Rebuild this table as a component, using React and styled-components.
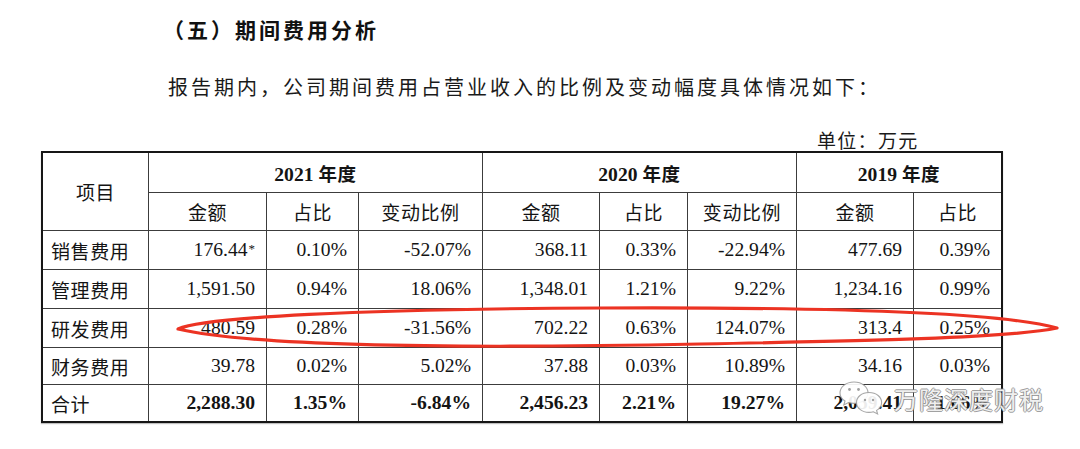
import React from 'react';
import styled, { createGlobalStyle } from 'styled-components';

const GlobalStyle = createGlobalStyle`
  html, body {
    margin: 0;
    padding: 0;
    background: #fff;
  }
  body {
    font-family: "Liberation Serif", "Noto Sans CJK SC", serif;
    color: #111;
  }
`;

const Page = styled.div`
  position: relative;
  width: 1080px;
  height: 449px;
  overflow: hidden;
  padding-left: 41px;
  box-sizing: border-box;
`;

const Title = styled.h2`
  margin: 0;
  padding: 14px 0 0 122px;
  font-family: "Noto Sans CJK SC", sans-serif;
  font-size: 21px;
  font-weight: 700;
  letter-spacing: 3px;
  line-height: 30px;
  color: #111;
`;

const Intro = styled.p`
  margin: 28px 0 0 127px;
  font-family: "Noto Sans CJK SC", sans-serif;
  font-size: 20px;
  font-weight: 400;
  letter-spacing: 3px;
  line-height: 30px;
  color: #1a1a1a;
`;

const Unit = styled.div`
  margin: 27px 0 0 776px;
  font-family: "Noto Sans CJK SC", sans-serif;
  font-size: 19px;
  letter-spacing: 1.3px;
  line-height: 22px;
  color: #1a1a1a;
`;

const Table = styled.div`
  display: grid;
  width: 962px;
  box-sizing: border-box;
  grid-template-columns: 105px 117px 91px 123px 116px 87px 108px 116px 87px;
  grid-template-rows: 39px 37px 38px 38px 38px 36px 36px;
  gap: 1px;
  background: #3c3c3c;
  border: 2px solid #161616;
  box-shadow: 0 1px 1px rgba(0, 0, 0, 0.25);
`;

const Cell = styled.div`
  grid-column: span ${({ $colSpan }) => $colSpan || 1};
  grid-row: span ${({ $rowSpan }) => $rowSpan || 1};
  background: #fff;
  display: flex;
  align-items: center;
  justify-content: ${({ $align }) =>
    $align === 'right' ? 'flex-end' : $align === 'left' ? 'flex-start' : 'center'};
  padding: ${({ $align }) =>
    $align === 'right' ? '0 11px 0 0' : $align === 'left' ? '0 0 0 8px' : '0'};
  font-family: ${({ $cjk }) =>
    $cjk ? '"Noto Sans CJK SC", sans-serif' : '"Liberation Serif", "Noto Sans CJK SC", serif'};
  font-size: ${({ $cjk }) => ($cjk ? '19px' : '19.6px')};
  letter-spacing: ${({ $cjk }) => ($cjk ? '0.6px' : '0')};
  font-weight: ${({ $bold }) => ($bold ? 700 : 400)};
  color: #141414;
  white-space: nowrap;
`;

const YearHead = styled.span`
  font-family: "Liberation Serif", "Noto Sans CJK SC", serif;
  font-size: 19.6px;
  font-weight: 700;

  b {
    font-family: "Noto Sans CJK SC", sans-serif;
    font-size: 18.5px;
    font-weight: 600;
    margin-left: 5px;
    letter-spacing: 0.6px;
  }
`;

const Sup = styled.span`
  font-size: 13px;
  line-height: 14px;
  position: relative;
  top: -1px;
  margin-left: 1px;
`;

const Overlay = styled.svg`
  position: absolute;
  left: 0;
  top: 0;
  pointer-events: none;
`;

const Watermark = styled.div`
  position: absolute;
  left: 837px;
  top: 380px;
  display: flex;
  align-items: center;
  gap: 9px;
  pointer-events: none;

  span {
    font-family: "Noto Sans CJK SC", sans-serif;
    font-size: 24px;
    font-weight: 400;
    letter-spacing: 1px;
    line-height: 30px;
    color: rgba(255, 255, 255, 0.9);
    text-shadow:
      1px 0 0 rgba(130, 130, 130, 0.75),
      -1px 0 0 rgba(130, 130, 130, 0.75),
      0 1px 0 rgba(130, 130, 130, 0.75),
      0 -1px 0 rgba(130, 130, 130, 0.75);
    margin-top: 2px;
  }
`;

const WeChatMark = () => (
  <svg width="48" height="36" viewBox="0 0 48 36">
    <g fill="rgba(255,255,255,0.92)" stroke="rgba(150,150,150,0.85)" strokeWidth="1.1">
      <path d="M17 2 C8.5 2 3 7.5 3 13 C3 16.5 5 19.2 8 21 L6.8 25 L11.5 22.6 C13.2 23.1 15 23.4 17 23.4 C25 23.4 31 18.2 31 12.8 C31 7.3 25.3 2 17 2 Z" />
      <path d="M32 12.5 C24.5 12.5 19.5 17.2 19.5 22.5 C19.5 27.8 24.5 32.4 32 32.4 C33.6 32.4 35 32.2 36.4 31.8 L40.6 34 L39.6 30.4 C42.6 28.6 44.6 25.8 44.6 22.5 C44.6 17.2 39.5 12.5 32 12.5 Z" />
    </g>
    <g fill="rgba(150,150,150,0.9)">
      <circle cx="12.5" cy="9.5" r="1.4" />
      <circle cx="21.5" cy="9.5" r="1.4" />
      <circle cx="28" cy="20" r="1.2" />
      <circle cx="36" cy="20" r="1.2" />
    </g>
  </svg>
);

const years = [
  { label: '2021', span: 3 },
  { label: '2020', span: 3 },
  { label: '2019', span: 2 },
];

const subHeads = ['金额', '占比', '变动比例', '金额', '占比', '变动比例', '金额', '占比'];

const rows = [
  { name: '销售费用', values: ['176.44', '0.10%', '-52.07%', '368.11', '0.33%', '-22.94%', '477.69', '0.39%'], mark: true },
  { name: '管理费用', values: ['1,591.50', '0.94%', '18.06%', '1,348.01', '1.21%', '9.22%', '1,234.16', '0.99%'] },
  { name: '研发费用', values: ['480.59', '0.28%', '-31.56%', '702.22', '0.63%', '124.07%', '313.4', '0.25%'] },
  { name: '财务费用', values: ['39.78', '0.02%', '5.02%', '37.88', '0.03%', '10.89%', '34.16', '0.03%'] },
  { name: '合计', values: ['2,288.30', '1.35%', '-6.84%', '2,456.23', '2.21%', '19.27%', '2,059.41', '1.66%'], total: true },
];

const App = () => (
  <>
    <GlobalStyle />
    <Page>
      <Title>（五）期间费用分析</Title>
      <Intro>报告期内，公司期间费用占营业收入的比例及变动幅度具体情况如下：</Intro>
      <Unit>单位：万元</Unit>

      <Table>
        <Cell $rowSpan={2} $cjk>项目</Cell>
        {years.map((y) => (
          <Cell key={y.label} $colSpan={y.span}>
            <YearHead>
              {y.label}
              <b>年度</b>
            </YearHead>
          </Cell>
        ))}
        {subHeads.map((h, i) => (
          <Cell key={i} $cjk>{h}</Cell>
        ))}

        {rows.map((row) => (
          <React.Fragment key={row.name}>
            <Cell $align="left" $cjk>{row.name}</Cell>
            {row.values.map((v, i) => (
              <Cell key={i} $align="right" $bold={row.total}>
                {v}
                {row.mark && i === 0 && <Sup>*</Sup>}
              </Cell>
            ))}
          </React.Fragment>
        ))}
      </Table>

      <Overlay width="1080" height="449" viewBox="0 0 1080 449">
        <path
          d="M178 329 C205 317 360 309 600 308 C830 307 1000 312 1057 328 C1010 338 860 341 700 344 C500 348 260 348 178 329 Z"
          fill="none"
          stroke="#ec3323"
          strokeWidth="3.2"
          strokeLinejoin="round"
        />
      </Overlay>

      <Watermark>
        <WeChatMark />
        <span>万隆深度财税</span>
      </Watermark>
    </Page>
  </>
);

export default App;
